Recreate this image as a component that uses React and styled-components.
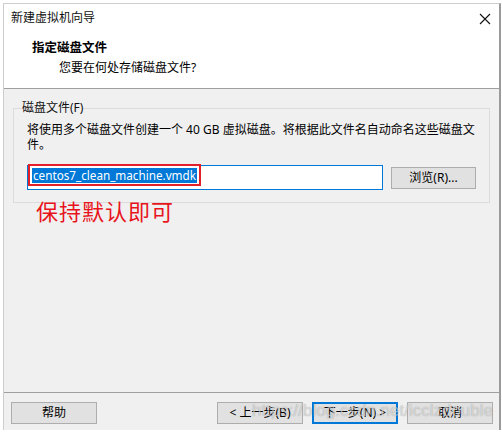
import React from 'react'
import styled, { createGlobalStyle } from 'styled-components'

const GlobalStyle = createGlobalStyle`
  html, body {
    margin: 0;
    background: #fff;
  }
  body {
    font-family: "Noto Sans", "Noto Sans CJK SC", sans-serif;
    font-size: 12px;
    color: #000;
  }
`

function App() {
  return (
    <>
      <GlobalStyle />
      <Window>
        <Header>
          <TitleRow>
            <Title>新建虚拟机向导</Title>
            <CloseButton>
              <svg width="12" height="12" viewBox="0 0 12 12">
                <path d="M1 1 L11 11 M11 1 L1 11" stroke="#111" strokeWidth="1.1" fill="none" />
              </svg>
            </CloseButton>
          </TitleRow>
          <StepTitle>指定磁盘文件</StepTitle>
          <StepSubtitle>您要在何处存储磁盘文件?</StepSubtitle>
        </Header>

        <Body>
          <Group>
            <Legend>磁盘文件(F)</Legend>
            <Description>
              <Line>将使用多个磁盘文件创建一个 40 GB 虚拟磁盘。将根据此文件名自动命名这些磁盘文</Line>
              <Line>件。</Line>
            </Description>
            <FileRow>
              <FileInput>
                <Marked>
                  <Selected>centos7_clean_machine.vmdk</Selected>
                </Marked>
              </FileInput>
              <Button>浏览(R)...</Button>
            </FileRow>
          </Group>
          <Annotation>保持默认即可</Annotation>
        </Body>

        <Footer>
          <Button $wide>帮助</Button>
          <NavGroup>
            <Button $wide>&lt; 上一步(B)</Button>
            <Button $wide $primary>下一步(N) &gt;</Button>
            <Button $wide>取消</Button>
          </NavGroup>
          <Watermark>https://blog.csdn.net/icclzdouble</Watermark>
        </Footer>
      </Window>
    </>
  )
}

export default App

const Window = styled.div`
  position: relative;
  margin: 3px 0 0 3px;
  width: 498px;
  box-sizing: border-box;
  border-left: 1px solid #cdcdcd;
  border-top: 1px solid #cdcdcd;
  border-right: 2px solid #9a9a9a;
  background: #f0f0f0;
`

const Header = styled.div`
  height: 85px;
  background: #fff;
  border-bottom: 1px solid #a0a0a0;
  padding-top: 6px;
  box-sizing: border-box;
`

const TitleRow = styled.div`
  display: flex;
  justify-content: space-between;
  align-items: center;
  padding: 0 8px 0 7px;
  height: 16px;
`

const Title = styled.span`
  line-height: 16px;
  color: #111;
`

const CloseButton = styled.span`
  display: flex;
  align-items: center;
  margin-top: 2px;
`

const StepTitle = styled.div`
  margin: 14px 0 0 28px;
  font-weight: bold;
  font-size: 12.5px;
  line-height: 16px;
`

const StepSubtitle = styled.div`
  margin: 4px 0 0 55px;
  line-height: 16px;
`

const Body = styled.div`
  height: 304px;
  padding-top: 11px;
  box-sizing: border-box;
  background: #f0f0f0;
  border-bottom: 1px solid #a0a0a0;
`

const Group = styled.fieldset`
  margin: 0 0 0 9px;
  width: 477px;
  box-sizing: border-box;
  border: 1px solid #dcdcdc;
  padding: 0 0 12px 8px;
`

const Legend = styled.legend`
  padding: 0;
  line-height: 16px;
  color: #111;
`

const Description = styled.div`
  margin: 6px 0 0 5px;
  line-height: 15px;
`

const Line = styled.div`
  white-space: nowrap;
`

const FileRow = styled.div`
  display: flex;
  align-items: flex-start;
  gap: 8px;
  margin: 13px 0 0 5px;
`

const FileInput = styled.div`
  width: 356px;
  height: 25px;
  box-sizing: border-box;
  border: 1px solid #0078d7;
  background: #fff;
  display: flex;
  align-items: flex-start;
`

const Marked = styled.span`
  display: inline-flex;
  align-items: center;
  margin: -2px 0 0 0;
  height: 22px;
  padding: 0 2px;
  border: 2px solid #e3202a;
  box-sizing: border-box;
`

const Selected = styled.span`
  background: #0078d7;
  color: #fff;
  line-height: 15px;
  font-size: 11.7px;
  padding: 0 1px;
`

const Button = styled.button`
  width: ${p => (p.$wide ? '86px' : '85px')};
  height: 22px;
  margin-top: ${p => (p.$wide ? '0' : '2px')};
  padding: 0;
  box-sizing: border-box;
  background: #e1e1e1;
  border: 1px solid ${p => (p.$primary ? '#0078d7' : '#adadad')};
  box-shadow: ${p => (p.$primary ? 'inset 0 0 0 1px #0078d7' : 'none')};
  font-family: "Noto Sans", "Noto Sans CJK SC", sans-serif;
  font-size: 12px;
  color: #000;
  line-height: 18px;
`

const Annotation = styled.div`
  margin: -5px 0 0 32px;
  font-family: "Noto Sans CJK SC", sans-serif;
  font-size: 22px;
  line-height: 24px;
  letter-spacing: 1px;
  color: #e8141c;
`

const Footer = styled.div`
  position: relative;
  display: flex;
  justify-content: space-between;
  padding: 9px 6px 6px 7px;
`

const NavGroup = styled.div`
  display: flex;
  gap: 9px;
`

const Watermark = styled.span`
  position: absolute;
  right: 6px;
  top: 8px;
  font-family: "Liberation Sans", sans-serif;
  font-size: 17px;
  color: rgba(255, 255, 255, 0.55);
  text-shadow: 0 0 1px rgba(0, 0, 0, 0.35);
  pointer-events: none;
`
